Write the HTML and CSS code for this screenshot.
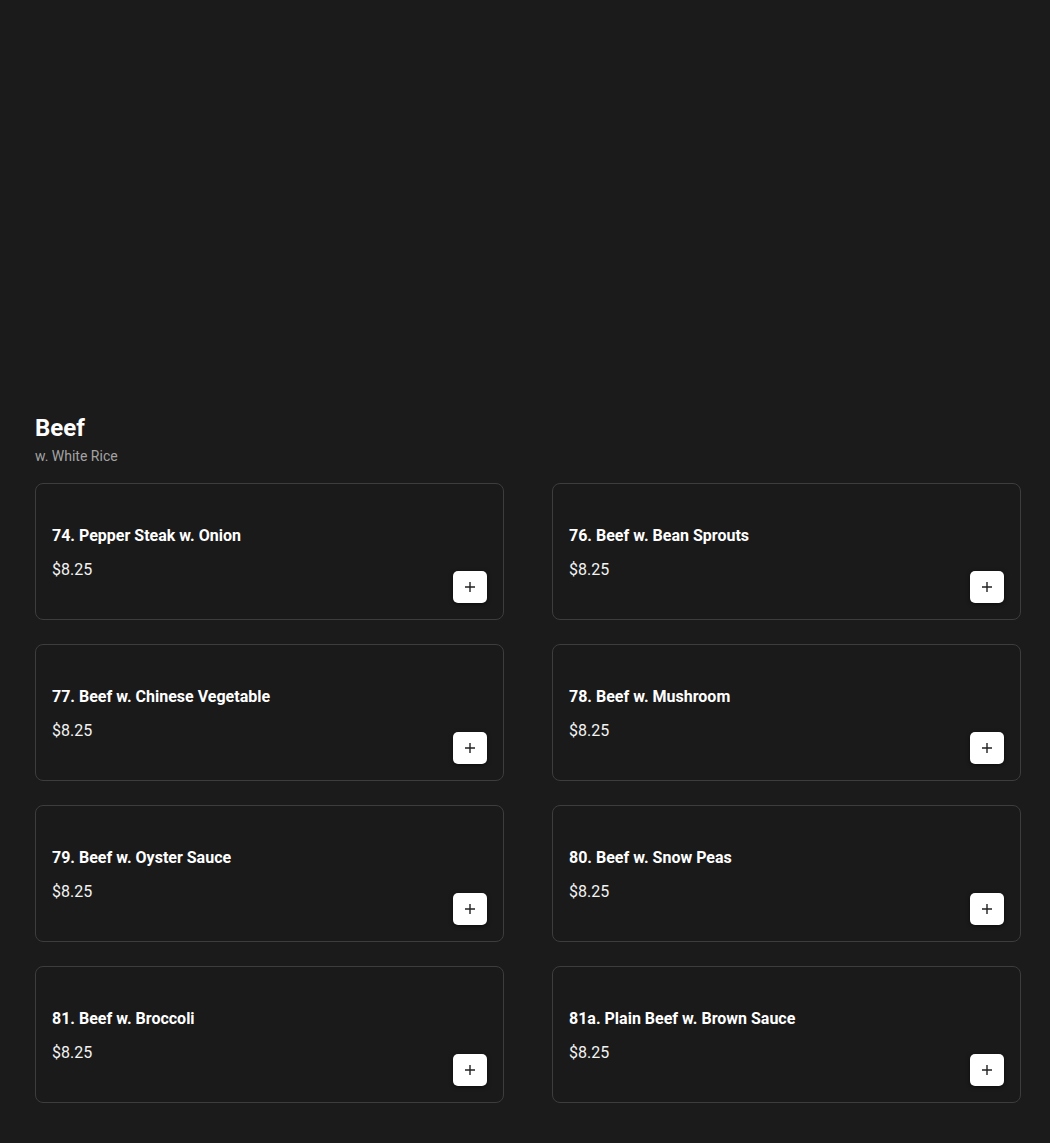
FILE: index.html
```html
<!DOCTYPE html>
<html lang="en">
<head>
    <meta charset="UTF-8">
    <meta name="viewport" content="width=device-width, initial-scale=1.0">
    <title>Beef</title>
    <link rel="stylesheet" href="styles.css">
</head>
<body>

<div class="menu">
    <div class="banner"></div>

    <div class="section">
        <h2 class="section-title">Beef</h2>
        <div class="section-note">w. White Rice</div>

        <div class="items">
            <div class="item">
                <div class="item-info">
                    <div class="item-name">74. Pepper Steak w. Onion</div>
                    <div class="item-price">$8.25</div>
                </div>
                <button class="add-btn" aria-label="Add"><svg width="12" height="12" viewBox="0 0 12 12"><path d="M6 1v10M1 6h10" stroke="#222" stroke-width="1.4"/></svg></button>
            </div>
            <div class="item">
                <div class="item-info">
                    <div class="item-name">76. Beef w. Bean Sprouts</div>
                    <div class="item-price">$8.25</div>
                </div>
                <button class="add-btn" aria-label="Add"><svg width="12" height="12" viewBox="0 0 12 12"><path d="M6 1v10M1 6h10" stroke="#222" stroke-width="1.4"/></svg></button>
            </div>
            <div class="item">
                <div class="item-info">
                    <div class="item-name">77. Beef w. Chinese Vegetable</div>
                    <div class="item-price">$8.25</div>
                </div>
                <button class="add-btn" aria-label="Add"><svg width="12" height="12" viewBox="0 0 12 12"><path d="M6 1v10M1 6h10" stroke="#222" stroke-width="1.4"/></svg></button>
            </div>
            <div class="item">
                <div class="item-info">
                    <div class="item-name">78. Beef w. Mushroom</div>
                    <div class="item-price">$8.25</div>
                </div>
                <button class="add-btn" aria-label="Add"><svg width="12" height="12" viewBox="0 0 12 12"><path d="M6 1v10M1 6h10" stroke="#222" stroke-width="1.4"/></svg></button>
            </div>
            <div class="item">
                <div class="item-info">
                    <div class="item-name">79. Beef w. Oyster Sauce</div>
                    <div class="item-price">$8.25</div>
                </div>
                <button class="add-btn" aria-label="Add"><svg width="12" height="12" viewBox="0 0 12 12"><path d="M6 1v10M1 6h10" stroke="#222" stroke-width="1.4"/></svg></button>
            </div>
            <div class="item">
                <div class="item-info">
                    <div class="item-name">80. Beef w. Snow Peas</div>
                    <div class="item-price">$8.25</div>
                </div>
                <button class="add-btn" aria-label="Add"><svg width="12" height="12" viewBox="0 0 12 12"><path d="M6 1v10M1 6h10" stroke="#222" stroke-width="1.4"/></svg></button>
            </div>
            <div class="item">
                <div class="item-info">
                    <div class="item-name">81. Beef w. Broccoli</div>
                    <div class="item-price">$8.25</div>
                </div>
                <button class="add-btn" aria-label="Add"><svg width="12" height="12" viewBox="0 0 12 12"><path d="M6 1v10M1 6h10" stroke="#222" stroke-width="1.4"/></svg></button>
            </div>
            <div class="item">
                <div class="item-info">
                    <div class="item-name">81a. Plain Beef w. Brown Sauce</div>
                    <div class="item-price">$8.25</div>
                </div>
                <button class="add-btn" aria-label="Add"><svg width="12" height="12" viewBox="0 0 12 12"><path d="M6 1v10M1 6h10" stroke="#222" stroke-width="1.4"/></svg></button>
            </div>
        </div>
    </div>
</div>

</body>
</html>
```

FILE: styles.css
```css
* {
    font-family: Roboto, "Liberation Sans", sans-serif;
    margin: 0;
    padding: 0;
    box-sizing: border-box;
}
body {
    background-color: #1b1b1b;
    color: #fff;
}
.menu {
    padding: 0 29px 40px 35px;
}
.banner {
    height: 412px;
}
.section-title {
    font-size: 24px;
    font-weight: 700;
    line-height: 32px;
}
.section-note {
    font-size: 14px;
    color: #a3a3a3;
    line-height: 20px;
    margin-top: 2px;
}
.items {
    display: grid;
    grid-template-columns: 1fr 1fr;
    column-gap: 48px;
    row-gap: 24px;
    margin-top: 17px;
}
.item {
    display: flex;
    justify-content: space-between;
    height: 137px;
    padding: 16px;
    border: 1px solid #3d3d3d;
    border-radius: 8px;
    background-color: #1a1a1a;
}
.item-info {
    align-self: center;
    display: flex;
    flex-direction: column;
    gap: 10px;
    margin-top: 2px;
}
.item-name {
    font-size: 16px;
    font-weight: 700;
    line-height: 24px;
}
.item-price {
    font-size: 16px;
    line-height: 24px;
    color: #f2f2f2;
}
.add-btn {
    align-self: flex-end;
    display: flex;
    align-items: center;
    justify-content: center;
    width: 34px;
    height: 32px;
    border: none;
    border-radius: 5px;
    background-color: #fff;
    box-shadow: 0 1px 4px rgba(0, 0, 0, 0.6);
    cursor: pointer;
}
```
